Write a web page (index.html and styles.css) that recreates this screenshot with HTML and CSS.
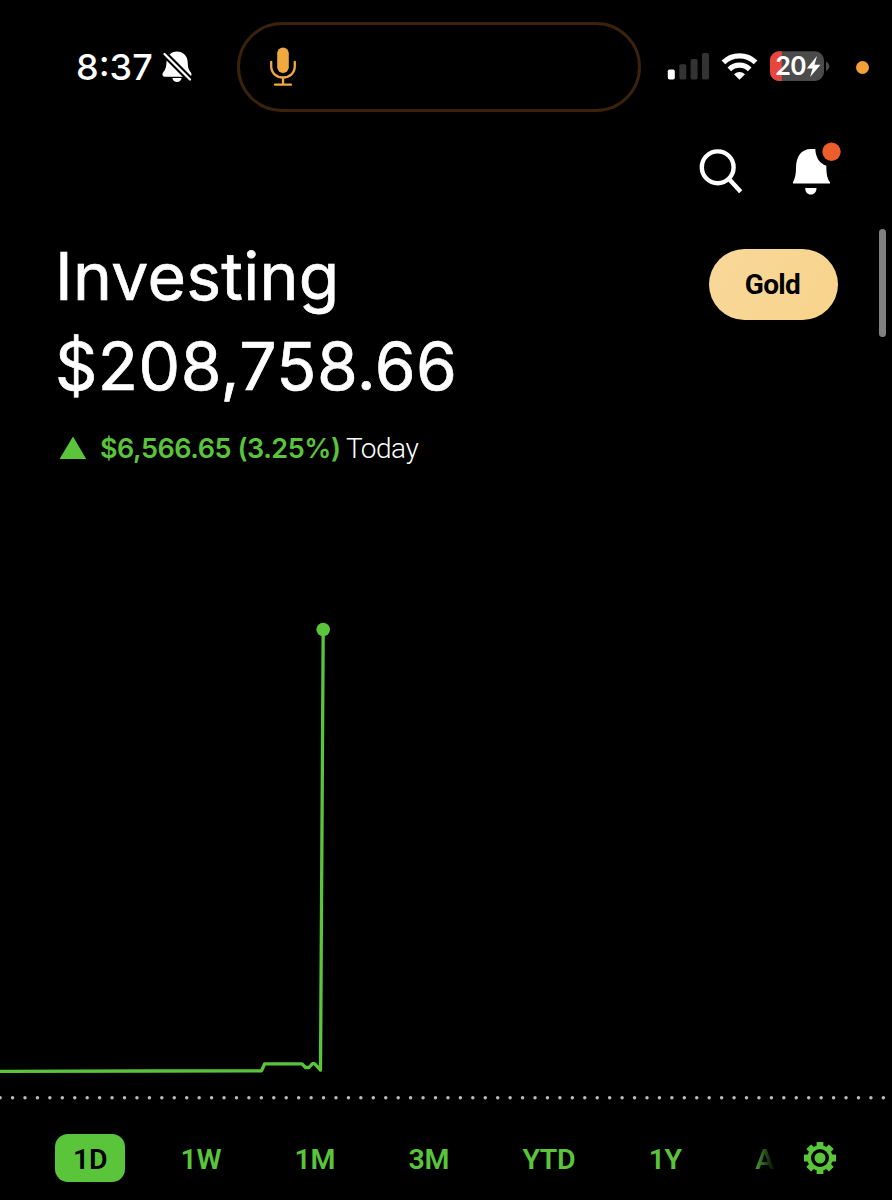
FILE: index.html
```html
<!DOCTYPE html>
<html lang="en">
<head>
<meta charset="utf-8">
<title>Investing</title>
<link rel="stylesheet" href="styles.css">
</head>
<body>
<div class="screen">
  <header class="status">
    <span class="clock">8:37</span>
    <svg class="muted" width="30" height="34" viewBox="162 50 30 34">
      <path fill="#fff" d="M177 51.500c6 0 10.500 4.500 10.700 10.500.1 6 1.200 8 3 10.300 1.500 2 .8 4.400-1.700 4.400h-24.200c-2.500 0-3-2.500-1.500-4.400 2-2.500 3-5 3.200-10.300.2-6 4.500-10.500 10.500-10.500z"/>
      <path fill="#fff" d="M172.400 78h9.200c-.5 2.700-2.300 4-4.600 4s-4.100-1.300-4.600-4z"/>
      <path stroke="#000" stroke-width="6.500" d="M162 51.500L192 81.500"/>
      <path stroke="#fff" stroke-width="2.300" stroke-linecap="round" d="M164.500 54L190 79.500"/>
    </svg>
    <div class="island">
      <svg width="28" height="42" viewBox="269 46 28 42" fill="none" stroke="#f0a840" stroke-width="2.300" stroke-linecap="round">
        <rect x="277.200" y="47.500" width="11.600" height="25.500" rx="5.800" fill="#f0a840" stroke="none"/>
        <path d="M271.200 62v4c0 7 5 11.500 11.800 11.500s11.800-4.500 11.800-11.500v-4M283 78v6.500M275 84.700h16"/>
      </svg>
    </div>
    <svg class="radio" width="164" height="34" viewBox="667 50 164 34">
      <rect x="667.800" y="69.500" width="7" height="10" rx="1.700" fill="#fff"/>
      <g fill="#333"><rect x="679.300" y="64.300" width="7" height="15.200" rx="1.700"/><rect x="690.600" y="59" width="7" height="20.500" rx="1.700"/><rect x="702" y="53" width="7" height="26.500" rx="1.700"/></g>
      <g fill="none" stroke="#fff" stroke-width="5.200">
        <path d="M723.400 62.400a23 23 0 0 1 32.200 0"/>
        <path d="M729.300 69.300a14.700 14.700 0 0 1 20.400 0"/>
      </g>
      <path fill="#fff" d="M734 74.200q5.500-4.300 11 0L739.500 79.800z"/>
      <clipPath id="cell"><rect x="770" y="51.300" width="54" height="29.700" rx="9"/></clipPath>
      <g clip-path="url(#cell)"><path fill="#4b4b4b" d="M770 51h54v30h-54z"/><path fill="#e8463c" d="M770 51h11.800v30H770z"/></g>
      <path fill="#4b4b4b" d="M826 61.500q3.300 1.800 3.300 4.700t-3.300 4.700z"/>
      <text class="charge" x="775.500" y="75.300" textLength="30.500" lengthAdjust="spacingAndGlyphs">20</text>
      <path fill="#fff" d="M817 56l-10.200 12.500h5.800l-2.500 8.500 10.400-12.300h-6z"/>
    </svg>
    <i class="recording"></i>
  </header>

  <nav class="actions">
    <svg width="150" height="54" viewBox="695 141 150 54">
      <g fill="none" stroke="#fff" stroke-width="4.400"><circle cx="717.700" cy="167.300" r="15.900"/><path d="M728.500 178.600l12.200 13.200"/></g>
      <path fill="#fff" d="M793 183.500v-1.300c2-3.700 3-8 3-14.500 0-10.700 5-18.700 15-18.700h4.300c.3 8.300 4.200 14.500 11 16.700.1 8.500 1 13.300 3.700 16.500v1.300z"/>
      <path fill="#fff" d="M805.200 188h11.300c0 4-2.200 6.500-5.700 6.500s-5.600-2.500-5.600-6.500z"/>
      <circle cx="831.500" cy="151.700" r="9.200" fill="#ee5e2b"/>
    </svg>
  </nav>

  <main>
    <section class="summary">
      <div>
        <h1 class="title">Investing</h1>
        <p class="balance">$208,758.66</p>
        <p class="change">
          <svg width="28" height="24" viewBox="0 0 28 24"><path fill="#5ac53b" d="M14 .5L27.200 23H.5z"/></svg>
          <span class="gain">$6,566.65 (3.25%)</span>
          <span class="period">Today</span>
        </p>
      </div>
      <button class="gold">Gold</button>
    </section>

    <svg class="chart" width="892" height="510" viewBox="0 600 892 510" fill="none">
      <path stroke="#5ac53b" stroke-width="3.300" stroke-linejoin="round" d="M0 1071.300L150 1071L261.500 1070.800L264.700 1063.800H302L305.500 1067.500H309L312.500 1063.700H314.500L320.500 1070L323.200 630"/>
      <circle cx="323.200" cy="629.500" r="6.800" fill="#5ac53b"/>
      <path stroke="#bbb" stroke-width="3.500" stroke-linecap="round" stroke-dasharray="0 12.440" d="M0.100 1097.700H892"/>
    </svg>

    <div class="ranges">
      <div class="tabs">
        <span class="tab active">1D</span><span class="tab">1W</span><span class="tab">1M</span><span class="tab">3M</span><span class="tab">YTD</span><span class="tab">1Y</span><span class="tab faded">A</span>
      </div>
      <svg class="gear" width="34" height="34" viewBox="-17 -17 34 34">
        <g fill="#5ac53b">
          <g id="teeth"><rect x="-3.400" y="-16" width="6.800" height="32" rx=".5"/><rect x="-16" y="-3.400" width="32" height="6.800" rx=".5"/></g>
          <use href="#teeth" transform="rotate(45)"/>
          <circle r="12.700"/>
        </g>
        <circle r="9" fill="#000"/><circle r="5.500" fill="#5ac53b"/>
      </svg>
    </div>
  </main>
  <i class="scrollbar"></i>
</div>
</body>
</html>
```

FILE: styles.css
```css
* { box-sizing: border-box; }
body { margin: 0; background: #000; color: #fff; font-family: Inter, "Liberation Sans", sans-serif; }
h1, p { margin: 0; font-weight: 400; }
svg { display: block; flex: none; }
.screen { position: relative; width: 892px; height: 1200px; overflow: hidden; }

.status { display: flex; align-items: center; height: 134px; padding-left: 76px; }
.clock { width: 86px; font-size: 36px; font-weight: 500; letter-spacing: 0; white-space: nowrap; }
.island { display: flex; align-items: center; width: 404px; height: 90px; margin-left: 45px; padding-left: 29px; border: 3px solid #3a220b; border-radius: 45px; }
.radio { margin-left: 26px; }
.charge { font: 700 26px Lato, sans-serif; fill: #fff; }
.recording { width: 13px; height: 13px; margin-left: 25px; border-radius: 50%; background: #f4a03a; }

.actions { display: flex; justify-content: flex-end; height: 102px; padding: 7px 47px 0 0; }

.summary { display: flex; justify-content: space-between; height: 364px; padding: 0 54px 0 55px; }
.title, .balance { font-size: 66px; line-height: 90px; white-space: nowrap; -webkit-text-stroke: 0.7px #fff; }
.title { margin-top: -5px; letter-spacing: 0.3px; }
.balance { letter-spacing: 0.5px; }
.change { display: flex; align-items: center; height: 36px; margin-top: 19px; padding-left: 4px; font-size: 27px; white-space: nowrap; }
.gain { width: 246px; margin-left: 13px; color: #5ac53b; font-weight: 600; letter-spacing: -0.45px; }
.period { font-family: Roboto, sans-serif; font-size: 28px; font-weight: 300; letter-spacing: -0.5px; }
.gold { width: 129px; height: 71px; margin-top: 13px; padding: 0 2px 0 0; border: 0; border-radius: 36px; background: linear-gradient(120deg, #f8d89a, #f8d48b); color: #000; font: 700 28px Roboto, sans-serif; letter-spacing: -0.7px; }

.ranges { display: flex; align-items: center; justify-content: space-between; height: 48px; margin-top: 24px; padding: 0 55px; }
.tabs { display: flex; gap: 37.3px; }
.tab { height: 48px; padding: 0 18px; border-radius: 13px; color: #5ac53b; font: 600 28.5px/52px Roboto, sans-serif; letter-spacing: -0.3px; }
.active { background: #5ac53b; color: #000; }
.faded { padding-right: 0; color: transparent; background: linear-gradient(90deg, #4aa031 0 18px, #0c1a08 35px); background-clip: text; -webkit-background-clip: text; }

.scrollbar { position: absolute; top: 229px; right: 6px; width: 7px; height: 108px; border-radius: 4px; background: #808080; }
```
